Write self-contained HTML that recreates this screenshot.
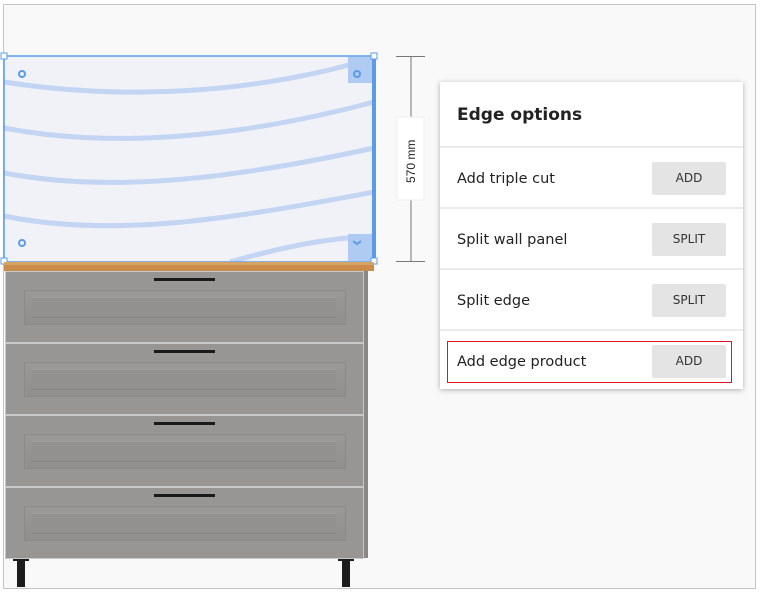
<!DOCTYPE html><html><head><style>
body{margin:0;width:761px;height:593px;background:#fff;position:relative;overflow:hidden;font-family:"DejaVu Sans",sans-serif}
.frame{position:absolute;left:3px;top:4px;width:751px;height:583px;border:1px solid #c4c4c4;background:#f9f9f9}
.a{position:absolute}
.panel{left:440px;top:82px;width:303px;height:307px;background:#fff;box-shadow:0 1px 5px rgba(0,0,0,.3)}
.row{position:absolute;left:0;width:303px;height:60px;border-top:2px solid #ebebeb}
.row span{position:absolute;left:17px;top:23px;font-size:14.5px;color:#222}
.btn{position:absolute;left:212px;top:14px;width:74px;height:33px;background:#e4e4e4;border-radius:2px;font-size:12px;color:#333;text-align:center;line-height:32px}
.drawer{position:absolute;left:5px;width:357px;height:70px;background:#989695;border:1px solid #c8c8c8}
.drawer .h{position:absolute;left:148px;top:6px;width:61px;height:3px;background:#1a1a1a}
.drawer .p{position:absolute;left:18px;top:18px;width:320px;height:33px;border:1px solid #8c8a89;background:linear-gradient(#9a9897,#918f8e)}
.drawer .q{position:absolute;left:26px;top:25px;width:304px;height:19px;background:#939190;border-top:1px solid #a09e9d;border-bottom:1px solid #878584}
</style></head><body>
<div class="frame"></div>
<svg class="a" style="left:0;top:0" width="440" height="593">
<rect x="4" y="56" width="370" height="206" fill="#f0f2f8"/>
<g stroke="#c3d5f2" stroke-width="5" fill="none">
<path d="M4 82 C120 100 250 95 374 58"/>
<path d="M4 128 C120 150 250 135 374 102"/>
<path d="M4 173 C120 195 250 175 374 148"/>
<path d="M4 216 C120 240 250 215 374 192"/>
<path d="M230 262 C290 245 330 238 374 236"/>
</g>
<rect x="348" y="57" width="24" height="26" fill="#b0cbf2"/>
<rect x="348" y="234" width="24" height="27" fill="#b0cbf2"/>
<rect x="4" y="56" width="370" height="206" fill="none" stroke="#5b9be8" stroke-width="1.5"/>
<rect x="372" y="56" width="4" height="206" fill="#5b9be8"/>
<g fill="none" stroke="#5b9be8" stroke-width="2"><circle cx="22" cy="74" r="3"/><circle cx="22" cy="243" r="3"/><circle cx="357" cy="74" r="3"/><path d="M353 241 l4 3 4-3"/></g>
<g fill="#fff" stroke="#5b9be8"><rect x="1" y="53" width="6" height="6"/><rect x="371" y="53" width="6" height="6"/><rect x="1" y="258" width="6" height="6"/><rect x="371" y="258" width="6" height="6"/></g>
<rect x="4" y="262" width="370" height="9" fill="#c98c4b"/>
<rect x="4" y="262" width="370" height="3" fill="#d9a462"/>
<rect x="362" y="271" width="6" height="287" fill="#8a8887"/>
<g fill="#1c1c1c"><rect x="13" y="558" width="16" height="3"/><rect x="17" y="560" width="8" height="27"/><rect x="338" y="558" width="16" height="3"/><rect x="342" y="560" width="8" height="27"/></g>
<g stroke="#777" stroke-width="1"><line x1="411" y1="56" x2="411" y2="261"/><line x1="396" y1="56.5" x2="425" y2="56.5"/><line x1="396" y1="261.5" x2="425" y2="261.5"/></g>
<rect x="397" y="117" width="27" height="83" fill="#fff" stroke="#eee"/>
<text x="0" y="0" transform="translate(415,183) rotate(-90)" font-family="Liberation Sans" font-size="12" fill="#222">570 mm</text>
</svg>
<div class="drawer" style="top:271px"><div class="h"></div><div class="p"></div><div class="q"></div></div>
<div class="drawer" style="top:343px"><div class="h"></div><div class="p"></div><div class="q"></div></div>
<div class="drawer" style="top:415px"><div class="h"></div><div class="p"></div><div class="q"></div></div>
<div class="drawer" style="top:487px"><div class="h"></div><div class="p"></div><div class="q"></div></div>
<div class="a panel">
<div class="a" style="left:17px;top:23px;font-size:17px;font-weight:bold;color:#222">Edge options</div>
<div class="row" style="top:64px"><span>Add triple cut</span><div class="btn">ADD</div></div>
<div class="row" style="top:125px"><span>Split wall panel</span><div class="btn">SPLIT</div></div>
<div class="row" style="top:186px"><span>Split edge</span><div class="btn">SPLIT</div></div>
<div class="row" style="top:247px"><span>Add edge product</span><div class="btn">ADD</div></div>
<div class="a" style="left:7px;top:259px;width:283px;height:40px;border:1px solid #e0141e"></div>
</div>
</body></html>
